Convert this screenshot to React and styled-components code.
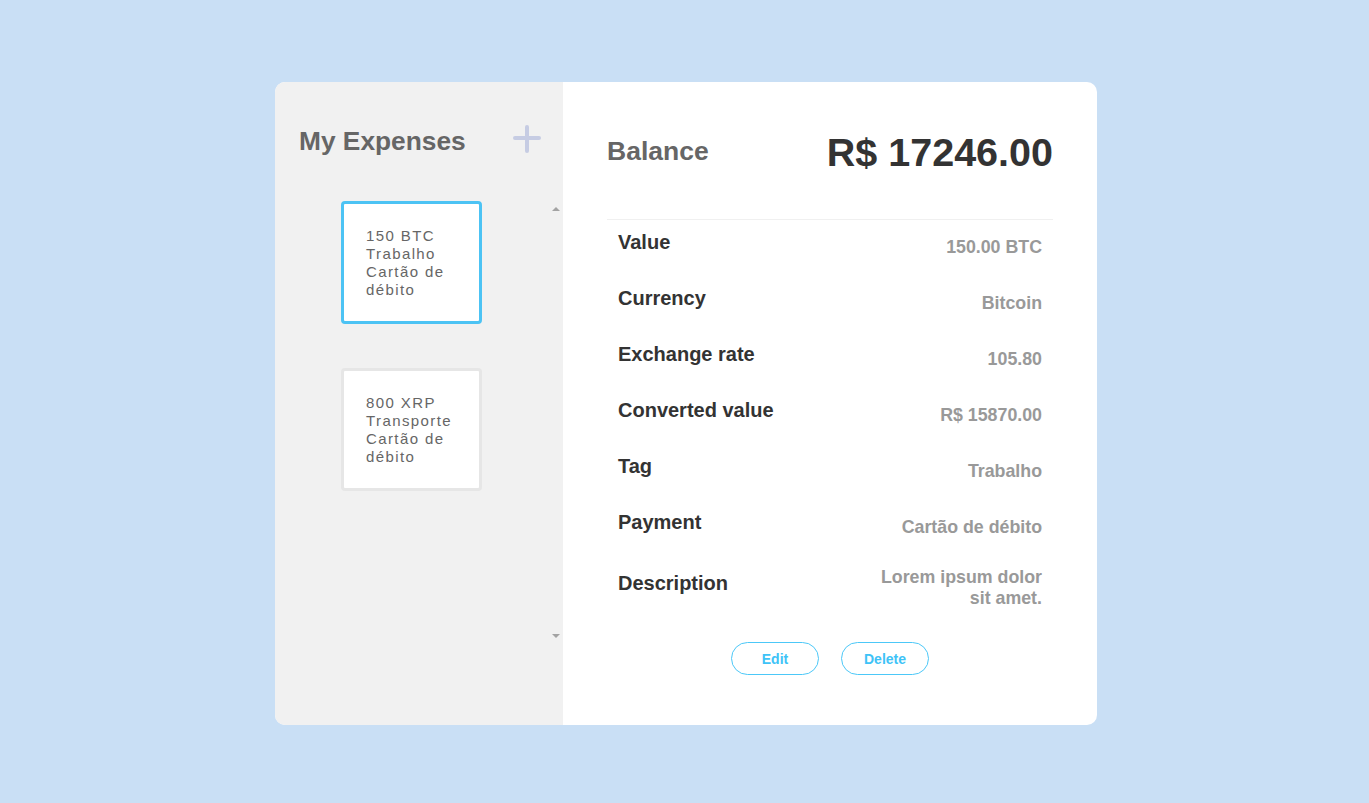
import React, { useState } from "react";
import styled, { createGlobalStyle } from "styled-components";

const expenses = [
  {
    id: 1,
    value: 150,
    currency: "BTC",
    currencyName: "Bitcoin",
    tag: "Trabalho",
    method: "Cartão de débito",
    rate: 105.8,
    description: "Lorem ipsum dolor sit amet.",
  },
  {
    id: 2,
    value: 800,
    currency: "XRP",
    currencyName: "Ripple",
    tag: "Transporte",
    method: "Cartão de débito",
    rate: 2.4,
    description: "Lorem ipsum dolor sit amet.",
  },
];

function PlusIcon() {
  return (
    <svg width="28" height="28" viewBox="0 0 28 28">
      <path
        d="M14 2 V26 M2 13 H26"
        stroke="#c6cce3"
        strokeWidth="4"
        strokeLinecap="round"
        fill="none"
      />
    </svg>
  );
}

function App() {
  const [selectedId, setSelectedId] = useState(1);
  const selected = expenses.find((item) => item.id === selectedId);

  const rows = [
    ["Value", `${selected.value.toFixed(2)} ${selected.currency}`],
    ["Currency", selected.currencyName],
    ["Exchange rate", selected.rate.toFixed(2)],
    ["Converted value", `R$ ${(selected.value * selected.rate).toFixed(2)}`],
    ["Tag", selected.tag],
    ["Payment", selected.method],
    ["Description", selected.description],
  ];

  return (
    <>
      <GlobalStyle />
      <Page>
        <Wallet>
          <Sidebar>
            <SidebarHeader>
              <Title>My Expenses</Title>
              <AddButton aria-label="Add expense">
                <PlusIcon />
              </AddButton>
            </SidebarHeader>
            <ListArea>
              <ExpenseList>
                {expenses.map((item) => (
                  <ExpenseCard
                    key={item.id}
                    $active={item.id === selectedId}
                    onClick={() => setSelectedId(item.id)}
                  >
                    <span>
                      {item.value} {item.currency}
                    </span>
                    <span>{item.tag}</span>
                    <span>{item.method}</span>
                  </ExpenseCard>
                ))}
              </ExpenseList>
              <ScrollTrack>
                <ScrollArrow $dir="up" />
                <ScrollArrow $dir="down" />
              </ScrollTrack>
            </ListArea>
          </Sidebar>
          <Details>
            <BalanceRow>
              <BalanceLabel>Balance</BalanceLabel>
              <BalanceValue>R$ 17246.00</BalanceValue>
            </BalanceRow>
            <InfoList>
              {rows.map(([label, value]) => (
                <InfoRow key={label}>
                  <InfoLabel>{label}</InfoLabel>
                  <InfoValue>{value}</InfoValue>
                </InfoRow>
              ))}
            </InfoList>
            <Actions>
              <ActionButton>Edit</ActionButton>
              <ActionButton>Delete</ActionButton>
            </Actions>
          </Details>
        </Wallet>
      </Page>
    </>
  );
}

const GlobalStyle = createGlobalStyle`
  * {
    box-sizing: border-box;
  }
  body {
    margin: 0;
    background-color: #c9dff5;
    font-family: "Liberation Sans", Arial, sans-serif;
  }
`;

const Page = styled.main`
  display: flex;
  justify-content: center;
  align-items: center;
  min-height: 100vh;
  padding: 4px 0 0 3px;
`;

const Wallet = styled.section`
  display: flex;
  width: 822px;
  height: 643px;
  border-radius: 10px;
  overflow: hidden;
  background-color: white;
`;

const Sidebar = styled.aside`
  display: flex;
  flex-direction: column;
  width: 288px;
  background-color: #f1f1f1;
  padding-top: 44px;
`;

const SidebarHeader = styled.div`
  display: flex;
  justify-content: space-between;
  align-items: center;
  padding: 0 22px 0 24px;
  margin-bottom: 45px;
`;

const Title = styled.h2`
  margin: 0;
  font-size: 26.3px;
  line-height: 30px;
  font-weight: 700;
  color: #666;
`;

const AddButton = styled.button`
  display: flex;
  background: none;
  border: none;
  padding: 0;
  margin-top: -4px;
  cursor: pointer;
`;

const ListArea = styled.div`
  display: flex;
  height: 443px;
`;

const ExpenseList = styled.div`
  flex: 1;
  display: flex;
  flex-direction: column;
  align-items: center;
  gap: 44px;
  overflow-y: auto;
`;

const ScrollTrack = styled.div`
  display: flex;
  flex-direction: column;
  justify-content: space-between;
  align-items: center;
  width: 15px;
  padding: 6px 0;
`;

const ScrollArrow = styled.span`
  width: 0;
  height: 0;
  border-left: 4px solid transparent;
  border-right: 4px solid transparent;
  ${(props) =>
    props.$dir === "up"
      ? "border-bottom: 4px solid #a3a3a3;"
      : "border-top: 4px solid #a3a3a3;"}
`;

const ExpenseCard = styled.div`
  display: flex;
  flex-direction: column;
  flex-shrink: 0;
  width: 141px;
  height: 123px;
  padding: 23px 16px 0 22px;
  background-color: white;
  border: 3px solid ${(props) => (props.$active ? "#4cc3f4" : "#e6e6e6")};
  border-radius: 4px;
  font-size: 15px;
  line-height: 18px;
  letter-spacing: 1.4px;
  color: #666;
  cursor: pointer;
`;

const Details = styled.div`
  flex: 1;
  display: flex;
  flex-direction: column;
  padding: 45px 44px 0;
`;

const BalanceRow = styled.div`
  display: flex;
  justify-content: space-between;
  align-items: center;
  height: 48px;
  margin-bottom: 44px;
`;

const BalanceLabel = styled.h3`
  margin: 0;
  font-size: 26.5px;
  font-weight: 700;
  color: #666;
`;

const BalanceValue = styled.span`
  font-size: 39.5px;
  font-weight: 700;
  color: #333;
  margin-top: 2px;
`;

const InfoList = styled.div`
  display: flex;
  flex-direction: column;
  border-top: 1px solid #f0f0f0;
`;

const InfoRow = styled.div`
  display: flex;
  justify-content: space-between;
  align-items: center;
  padding: 11px 11px 12px;
`;

const InfoLabel = styled.span`
  font-size: 20px;
  line-height: 23px;
  padding-bottom: 10px;
  font-weight: 700;
  color: #333;
`;

const InfoValue = styled.span`
  max-width: 170px;
  text-align: right;
  font-size: 17.8px;
  line-height: 21px;
  font-weight: 700;
  color: #999;
`;

const Actions = styled.div`
  display: flex;
  justify-content: center;
  gap: 22px;
  margin-top: 21px;
`;

const ActionButton = styled.button`
  width: 88px;
  height: 33px;
  background-color: white;
  border: 1px solid #4cc8f8;
  border-radius: 17px;
  font-family: "Liberation Sans", Arial, sans-serif;
  font-size: 14px;
  font-weight: 700;
  color: #3ec3f7;
  cursor: pointer;
`;

export default App;
